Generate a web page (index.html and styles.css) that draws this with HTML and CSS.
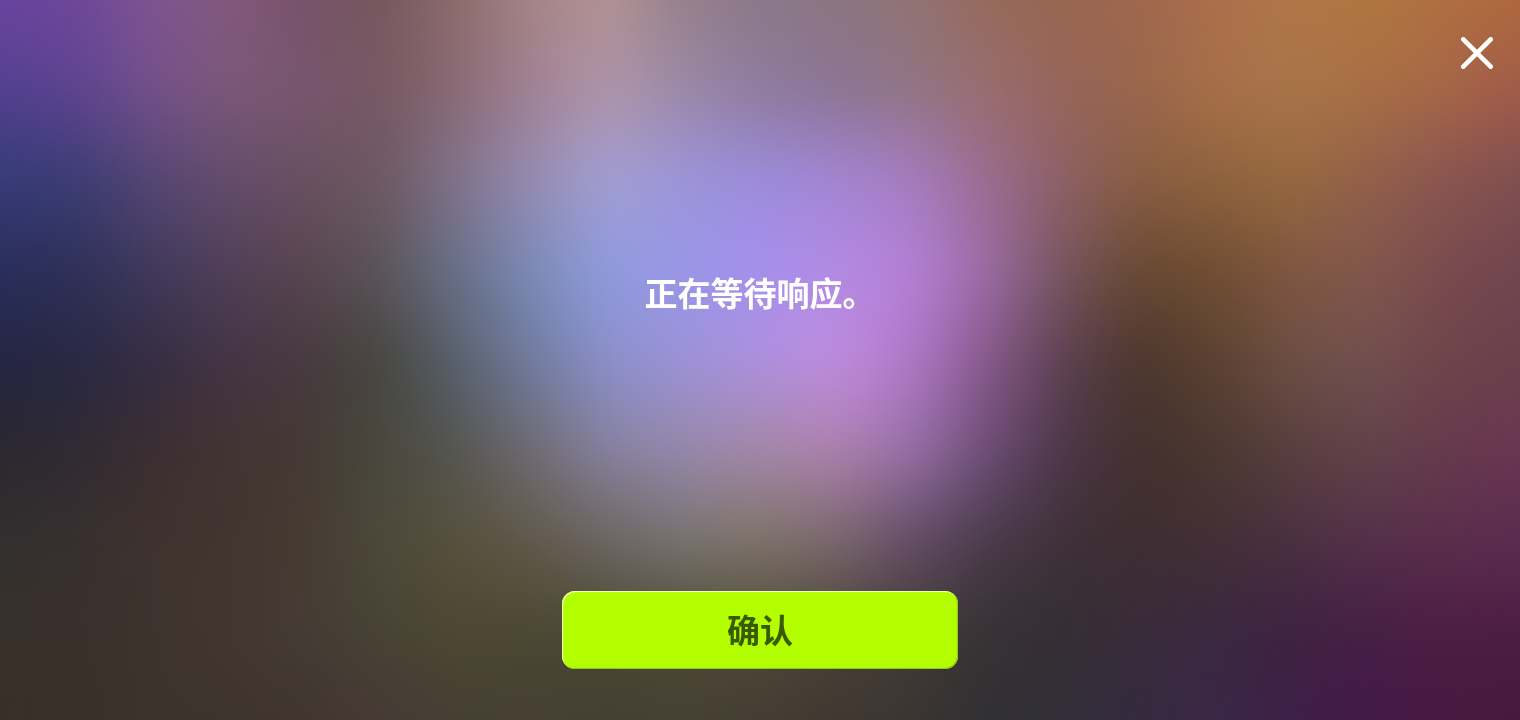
FILE: index.html
```html
<!DOCTYPE html>
<html lang="zh-CN">
<head>
<meta charset="utf-8">
<meta name="viewport" content="width=device-width, initial-scale=1">
<title>正在等待响应</title>
<link rel="stylesheet" href="styles.css">
</head>
<body>
<div class="backdrop" aria-hidden="true">
  <div class="band band-1"></div>
  <div class="band band-2"></div>
  <div class="band band-3"></div>
  <div class="band band-4"></div>
  <div class="band band-5"></div>
  <div class="band band-6"></div>
  <div class="band band-7"></div>
  <div class="band band-8"></div>
  <div class="band band-9"></div>
  <div class="veil"></div>
</div>
<main class="dialog">
  <button class="close" type="button" aria-label="关闭">
    <svg class="close-icon" viewBox="0 0 32 32" aria-hidden="true"><path d="M2.3 2.3 29.7 29.7M29.7 2.3 2.3 29.7"/></svg>
  </button>
  <p class="message">正在等待响应。</p>
  <button class="confirm" type="button">确认</button>
</main>
</body>
</html>
```

FILE: styles.css
```css
* {
  box-sizing: border-box;
}

body {
  margin: 0;
  background: #3a302c;
  font-family: "Noto Sans CJK SC", sans-serif;
}

/* Colour mesh: each band is a horizontal gradient that fades in over the one above it. */
.backdrop {
  position: fixed;
  inset: 0;
  overflow: hidden;
}

.band,
.veil {
  position: absolute;
  inset: 0;
}

.veil {
  backdrop-filter: blur(22px);
}

.band-1 {
  background: linear-gradient(90deg, #6a45a0, #70479a, #7f5592, #84597f, #785268, #76585e, #8c6c6c, #a58585, #b29294, #968089, #8b7888, #8b7680, #917473, #966a5c, #98664f, #a0674e, #ab704d, #b07848, #b07740, #b07040, #b0683e);
}

.band-2 {
  background: linear-gradient(90deg, #52408f, #5c4390, #74508a, #7c5878, #785670, #765861, #8a6a75, #a18195, #b095aa, #9a88a8, #8f7ba0, #8b7494, #917485, #996d6e, #96645a, #99664c, #a86f48, #a9744a, #a86f45, #a66648, #a05a4a);
  mask-image: linear-gradient(transparent 0%, #000 12.5%);
}

.band-3 {
  background: linear-gradient(90deg, #353c78, #3c3c74, #544674, #654c6c, #695060, #6d5860, #80728c, #968cb2, #a29fd4, #9c94d9, #9c8cdc, #a385d4, #a67cc0, #9a6c90, #8c6064, #8a5d42, #8e623e, #97693f, #925f4b, #895550, #7e4e50);
  mask-image: linear-gradient(transparent 12.5%, #000 25%);
}

.band-4 {
  background: linear-gradient(90deg, #2a2e5c, #2e3058, #40395c, #503f58, #58444f, #5a5458, #687088, #7b8bb8, #8f9cdf, #9996e8, #a590ee, #b48ae4, #b580d8, #9a6ca4, #76545c, #674832, #704e32, #805641, #82574c, #7a4a4e, #704650);
  mask-image: linear-gradient(transparent 25%, #000 37.5%);
}

.band-5 {
  background: linear-gradient(90deg, #242642, #292844, #352d42, #443446, #473a40, #47453f, #58606c, #717ca0, #8b90cc, #9c92d8, #ae90de, #c08ce0, #b078c8, #87588a, #5c4050, #4c362c, #5c4132, #6d4f44, #725050, #6e444a, #6c404c);
  mask-image: linear-gradient(transparent 37.5%, #000 50%);
}

.band-6 {
  background: linear-gradient(90deg, #2b2830, #302a32, #3c2e32, #423432, #443934, #48483d, #555550, #706b72, #8782a0, #9688ac, #a488a8, #af81ae, #9870a8, #6d4c76, #4c3648, #43302e, #4b3830, #593f3f, #62434a, #663a4c, #6a3654);
  mask-image: linear-gradient(transparent 50%, #000 62.5%);
}

.band-7 {
  background: linear-gradient(90deg, #32302f, #383030, #3e332e, #423530, #463b32, #4d493a, #57503c, #61594a, #6e6662, #797370, #7e7468, #7b686e, #644c66, #4a3b4b, #3e3038, #3e2e31, #432f36, #4b3041, #55304a, #5b2e4c, #5c2c50);
  mask-image: linear-gradient(transparent 62.5%, #000 75%);
}

.band-8 {
  background: linear-gradient(90deg, #38322c, #3a302b, #3e342e, #42372f, #453c36, #484334, #4e4832, #4c4832, #4c4735, #504b38, #504c3a, #4c423a, #443c38, #363234, #362e34, #392c3a, #3a2840, #3f2240, #461f46, #4d1e44, #4d1e44);
  mask-image: linear-gradient(transparent 75%, #000 87.5%);
}

.band-9 {
  background: linear-gradient(90deg, #3a2f2a, #3a302a, #3c342d, #3e342e, #40352f, #463a36, #453f33, #464034, #443f30, #454032, #443c32, #403730, #3a3532, #303033, #322f3a, #352a40, #3a2848, #3f1f48, #441a48, #461a42, #451a40);
  mask-image: linear-gradient(transparent 87.5%, #000 100%);
}

.dialog {
  position: relative;
  display: flex;
  flex-direction: column;
  align-items: center;
  min-height: 100vh;
  padding: 0 24px 51px;
}

.close {
  position: absolute;
  top: 29px;
  right: 19px;
  display: flex;
  padding: 8px;
  border: 0;
  background: none;
  cursor: pointer;
}

.close-icon {
  width: 32px;
  height: 32px;
  fill: none;
  stroke: #fff;
  stroke-width: 4.6;
  stroke-linecap: round;
}

.message {
  display: flex;
  flex: 1;
  align-items: center;
  margin: 0;
  padding-bottom: 8px;
  color: #fff;
  font-size: 33px;
  font-weight: 700;
  line-height: 48px;
}

.confirm {
  width: 396px;
  max-width: 100%;
  padding: 14px 24px 16px;
  border: 0;
  border-radius: 13px;
  background: #b3ff00;
  box-shadow: inset 1px 1px 1px #f0ffc8, inset -1px -1px 1px #8fc41c;
  color: #3a5a00;
  font-family: inherit;
  font-size: 33px;
  font-weight: 700;
  line-height: 48px;
  cursor: pointer;
}
```
